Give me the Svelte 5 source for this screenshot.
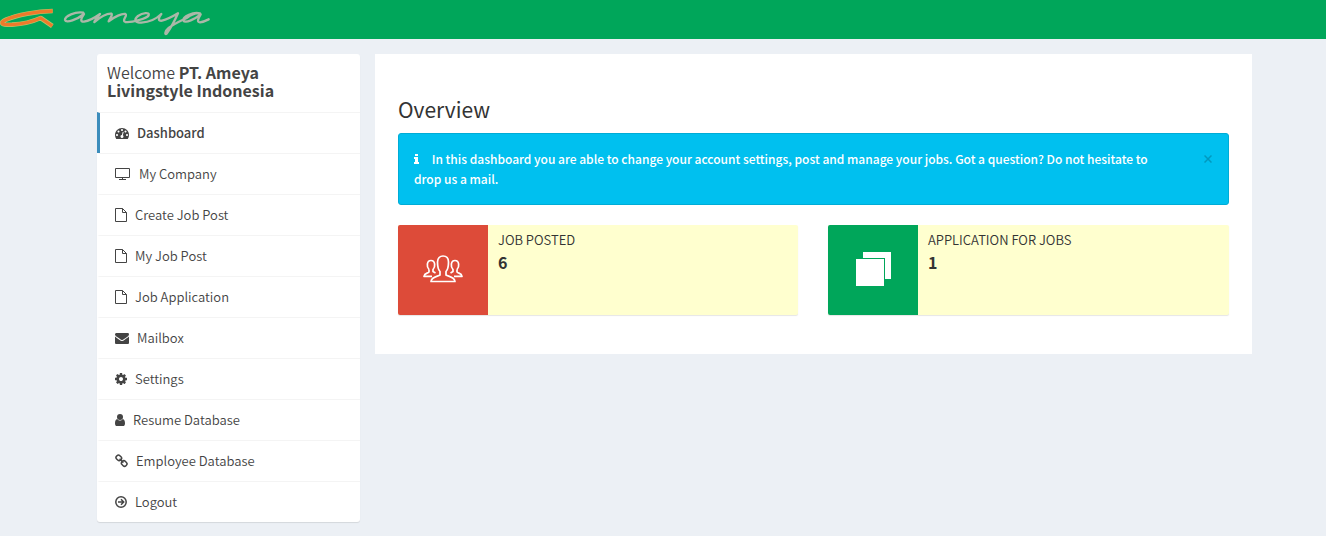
<script>
  const menu = [
    { icon: 'gauge', w: 14, label: 'Dashboard', active: true },
    { icon: 'desktop', w: 16, label: 'My Company' },
    { icon: 'page', w: 12, label: 'Create Job Post' },
    { icon: 'page', w: 12, label: 'My Job Post' },
    { icon: 'page', w: 12, label: 'Job Application' },
    { icon: 'mail', w: 14, label: 'Mailbox' },
    { icon: 'cog', w: 12, label: 'Settings' },
    { icon: 'user', w: 10, label: 'Resume Database' },
    { icon: 'link', w: 13, label: 'Employee Database' },
    { icon: 'exit', w: 12, label: 'Logout' }
  ];
  let showInfo = $state(true);
</script>

<header>
  <a class="logo" href="#home" aria-label="ameya">
    <svg viewBox="0 0 660 117" width="220" height="39" fill="none" stroke-linejoin="round">
      <path d="M158 33C110 34 50 45 18 59C-4 69 6 75 36 74C70 72 100 64 122 54L157 78" stroke="#b8c46a" stroke-width="14" />
      <path d="M158 33C110 34 50 45 18 59C-4 69 6 75 36 74C70 72 100 64 122 54L157 78" stroke="#ee7a2b" stroke-width="10" />
      <path d="M250 38C226 34 194 48 195 60C198 71 232 58 252 42C242 56 240 66 252 65C270 62 286 52 300 42C292 52 284 62 283 66C300 52 322 40 334 41C340 44 328 56 326 64C344 50 366 40 376 42C384 46 364 62 376 66C396 68 440 56 446 46C450 36 428 38 414 48C400 60 406 68 424 68C450 66 472 54 484 42C474 54 474 64 486 62C504 58 524 46 534 40C526 58 508 90 500 101C494 106 494 94 506 84C520 72 544 62 560 54C574 44 588 38 600 40C580 34 548 50 550 61C556 72 586 56 602 43C594 56 590 66 600 67C610 66 618 62 626 58" stroke="#aab8a8" stroke-width="7" stroke-linecap="round" />
    </svg>
  </a>
</header>

<div class="page">
  <aside>
    <h1>Welcome <strong>PT. Ameya Livingstyle Indonesia</strong></h1>
    <nav>
      {#each menu as item}
        <a href="#menu" class:active={item.active}>
          {#if item.icon === 'gauge'}
            <svg width={item.w} height="14" viewBox="0 0 1792 1792"><path fill="currentColor" d="M384 1152q0-53-37.500-90.500t-90.500-37.500-90.500 37.500-37.500 90.500 37.500 90.500 90.500 37.500 90.500-37.500 37.500-90.500zm192-448q0-53-37.500-90.500t-90.500-37.500-90.500 37.500-37.500 90.500 37.500 90.500 90.500 37.500 90.500-37.500 37.500-90.500zm428 481l101-382q6-26-7.500-48.500t-38.500-29.500-48 6.500-30 39.500l-101 382q-60 5-107 43.500t-63 98.500q-20 77 20 146t117 89 146-20 89-117q16-60-6-117t-72-91zm660-33q0-53-37.500-90.500t-90.500-37.500-90.500 37.500-37.500 90.500 37.500 90.500 90.500 37.500 90.500-37.500 37.500-90.500zm-640-640q0-53-37.500-90.500t-90.500-37.500-90.500 37.500-37.500 90.500 37.500 90.500 90.500 37.500 90.500-37.500 37.500-90.500zm448 192q0-53-37.500-90.500t-90.500-37.500-90.500 37.500-37.500 90.500 37.500 90.500 90.500 37.500 90.500-37.500 37.500-90.500zm320 448q0 261-141 483-19 29-54 29h-1402q-35 0-54-29-141-221-141-483 0-182 71-348t191-286 286-191 348-71 348 71 286 191 191 286 71 348z" /></svg>
          {:else if item.icon === 'desktop'}
            <svg width={item.w} height="14" viewBox="0 0 16 14" fill="none" stroke="currentColor"><path d="M.5 1.500h14v9H.5zM7.500 10.500v2M4 12.500h7" /></svg>
          {:else if item.icon === 'page'}
            <svg width={item.w} height="14" viewBox="0 0 12 14" fill="none" stroke="currentColor"><path d="M.5.5h7l4 4v9H.5zM7.500.5v4h4" /></svg>
          {:else if item.icon === 'mail'}
            <svg width={item.w} height="14" viewBox="0 0 1792 1792"><path fill="currentColor" d="M1792 710v794q0 66-47 113t-113 47h-1472q-66 0-113-47t-47-113v-794q44 49 101 87 362 246 497 345 57 42 92.500 65.500t94.500 48 110 24.500h2q51 0 110-24.500t94.500-48 92.500-65.500q170-123 498-345 57-39 100-87zm0-294q0 79-49 151t-122 123q-376 261-468 325-10 7-42.500 31t-54 38.500-52 32.500-57.500 27-50 9h-2q-23 0-50-9t-57.500-27-52-32.500-54-38.500-42.500-31q-91-64-262-182.500t-205-142.500q-62-42-117-115.500t-55-136.500q0-78 41.500-130t118.500-52h1472q65 0 112.500 47t47.500 113z" /></svg>
          {:else if item.icon === 'cog'}
            <svg width={item.w} height="14" viewBox="128 0 1536 1792"><path fill="currentColor" d="M1152 896q0-106-75-181t-181-75-181 75-75 181 75 181 181 75 181-75 75-181zm512-109v222q0 12-8 23t-20 13l-185 28q-19 54-39 91 35 50 107 138 10 12 10 25t-9 23q-27 37-99 108t-94 71q-12 0-26-9l-138-108q-44 23-91 38-16 136-29 186-7 28-36 28h-222q-14 0-24.500-8.500t-11.500-21.500l-28-184q-49-16-90-37l-141 107q-10 9-25 9-14 0-25-11-126-114-165-168-7-10-7-23 0-12 8-23 15-21 51-66.500t54-70.500q-27-50-41-99l-183-27q-13-2-21-12.500t-8-23.500v-222q0-12 8-23t19-13l186-28q14-46 39-92-40-57-107-138-10-12-10-24 0-10 9-23 26-36 98.500-107.500t94.500-71.500q13 0 26 10l138 107q44-23 91-38 16-136 29-186 7-28 36-28h222q14 0 24.500 8.500t11.500 21.500l28 184q49 16 90 37l142-107q9-9 24-9 13 0 25 10 129 119 165 170 7 8 7 22 0 12-8 23-15 21-51 66.500t-54 70.500q26 50 41 98l183 28q13 2 21 12.500t8 23.500z" /></svg>
          {:else if item.icon === 'user'}
            <svg width={item.w} height="14" viewBox="0 0 10 14" fill="currentColor"><circle cx="5" cy="4" r="3" /><path d="M2.300 6C.6 6.300 0 8.200 0 10.400 0 12 .8 13 2 13h6c1.200 0 2-1 2-2.600C10 8.200 9.400 6.300 7.700 6 6.200 8 3.800 8 2.300 6z" /></svg>
          {:else if item.icon === 'link'}
            <svg width={item.w} height="14" viewBox="0 0 13 14" fill="none" stroke="currentColor" stroke-width="1.500"><rect x="1" y="1.600" width="5.600" height="4.600" rx="2" transform="rotate(45 3.800 3.900)" /><rect x="6.400" y="7.200" width="5.600" height="4.600" rx="2" transform="rotate(45 9.200 9.500)" /><path d="M4.600 4.800l3.800 3.800" /></svg>
          {:else}
            <svg width={item.w} height="14" viewBox="0 0 12 14" fill="none" stroke="currentColor"><circle cx="6" cy="7" r="5.200" stroke-width="1.500" /><path d="M3 7h5M6 4.300L8.700 7 6 9.700" stroke-width="1.500" /></svg>
          {/if}
          <span>{item.label}</span>
        </a>
      {/each}
    </nav>
  </aside>

  <main>
    <h2>Overview</h2>
    {#if showInfo}
      <div class="alert" role="status">
        <p>
          <svg width="5" height="10" viewBox="0 0 5 10" fill="currentColor"><path d="M1 0h3v2H1zM0 3h4v5h1v2H0V8h1V5H0z" /></svg>
          In this dashboard you are able to change your account settings, post and manage your jobs. Got a question? Do not hesitate to drop us a mail.
        </p>
        <button type="button" aria-label="Close" onclick={() => (showInfo = false)}>
          <svg width="8" height="8" viewBox="0 0 8 8" fill="none" stroke="currentColor" stroke-width="1.500"><path d="M.5.5l7 7M7.500.5l-7 7" /></svg>
        </button>
      </div>
    {/if}
    <div class="cards">
      <section>
        <div class="tile red">
          <svg width="40" height="28" viewBox="0 0 40 28" fill="none" stroke="#fff" stroke-width="1.700" stroke-linejoin="round">
            <path d="M17 16.500C14.500 14 14.500 10 14.500 7 14.500 3 17 1 20 1s5.500 2 5.500 6c0 3 0 7-2.500 9.500v3.500c2 1.500 8.500 1.500 9 6.500H8c.5-5 7-5 9-6.500z" />
            <path d="M6 14.500C3.500 12 3.500 5.500 8 5.500s4.500 6.500 2 9v2l2.500 1.500M6 14.500V17c-1.500 1.500-4.500 1-5 4.300h8" />
            <path d="M34 14.500c2.500-2.500 2.500-9-2-9s-4.500 6.500-2 9v2L27.500 18M34 14.500V17c1.500 1.500 4.500 1 5 4.300h-8" />
          </svg>
        </div>
        <div class="info"><span>JOB POSTED</span><strong>6</strong></div>
      </section>
      <section>
        <div class="tile green">
          <svg width="35" height="34" viewBox="0 0 35 34" fill="#fff"><path d="M0 7h28v27H0zM7 0h28v27h-6V6H7z" /></svg>
        </div>
        <div class="info"><span>APPLICATION FOR JOBS</span><strong>1</strong></div>
      </section>
    </div>
  </main>
</div>

<style>
  :global(body) {
    margin: 0;
    background: #ecf0f5;
    color: #333;
    font-family: 'Source Sans Pro', 'Noto Sans CJK SC', sans-serif;
    font-size: 13px;
    font-weight: 350;
    line-height: 20px;
  }
  header {
    height: 39px;
    background: #00a65a;
  }
  .logo {
    display: inline-block;
  }
  svg {
    display: block;
    flex: none;
  }
  .page {
    box-sizing: border-box;
    max-width: 1178px;
    margin: 0 auto;
    padding: 15px 0 14px 23px;
    display: grid;
    grid-template-columns: 263px minmax(0, 1fr);
    gap: 15px;
    align-items: start;
  }
  aside {
    background: #fff;
    border-radius: 3px;
    box-shadow: 0 1px 1px rgba(0, 0, 0, 0.1);
    color: #444;
  }
  h1 {
    margin: 0;
    padding: 9px 20px 13px 10px;
    font-size: 16px;
    line-height: 18px;
    font-weight: 350;
  }
  strong {
    font-weight: 700;
  }
  nav a {
    display: flex;
    align-items: center;
    gap: 8px;
    height: 40px;
    padding-left: 15px;
    border-top: 1px solid #f4f4f4;
    border-left: 3px solid transparent;
    color: #444;
    text-decoration: none;
  }
  nav a.active {
    border-left-color: #3c8dbc;
    font-weight: 500;
  }
  main {
    background: #fff;
    padding: 42px 23px 39px;
  }
  h2 {
    margin: 0 0 11px;
    font-size: 21px;
    line-height: 26px;
    font-weight: 400;
  }
  .alert {
    display: flex;
    align-items: flex-start;
    justify-content: space-between;
    gap: 32px;
    margin-bottom: 20px;
    padding: 15px;
    border: 1px solid #00acd6;
    border-radius: 3px;
    background: #00c0ef;
    color: #fff;
    font-size: 12px;
    font-weight: 500;
  }
  .alert p {
    margin: 0;
  }
  .alert p svg {
    display: inline-block;
    margin-right: 10px;
  }
  .alert button {
    margin: 6px 0 0;
    padding: 0 1px;
    border: 0;
    background: none;
    color: #0099bf;
    cursor: pointer;
  }
  .cards {
    display: grid;
    grid-template-columns: 400fr 401fr;
    gap: 30px;
  }
  section {
    display: flex;
    min-height: 90px;
    border-radius: 2px;
    background: #ffffcf;
    box-shadow: 0 1px 1px rgba(0, 0, 0, 0.1);
  }
  .tile {
    box-sizing: border-box;
    width: 90px;
    padding-bottom: 2px;
    display: grid;
    place-items: center;
    border-radius: 2px 0 0 2px;
  }
  .red {
    background: #dd4b39;
  }
  .green {
    background: #00a65a;
  }
  .info {
    display: flex;
    flex-direction: column;
    padding: 5px 10px;
  }
  .info strong {
    font-size: 16px;
    line-height: 24px;
  }
</style>
